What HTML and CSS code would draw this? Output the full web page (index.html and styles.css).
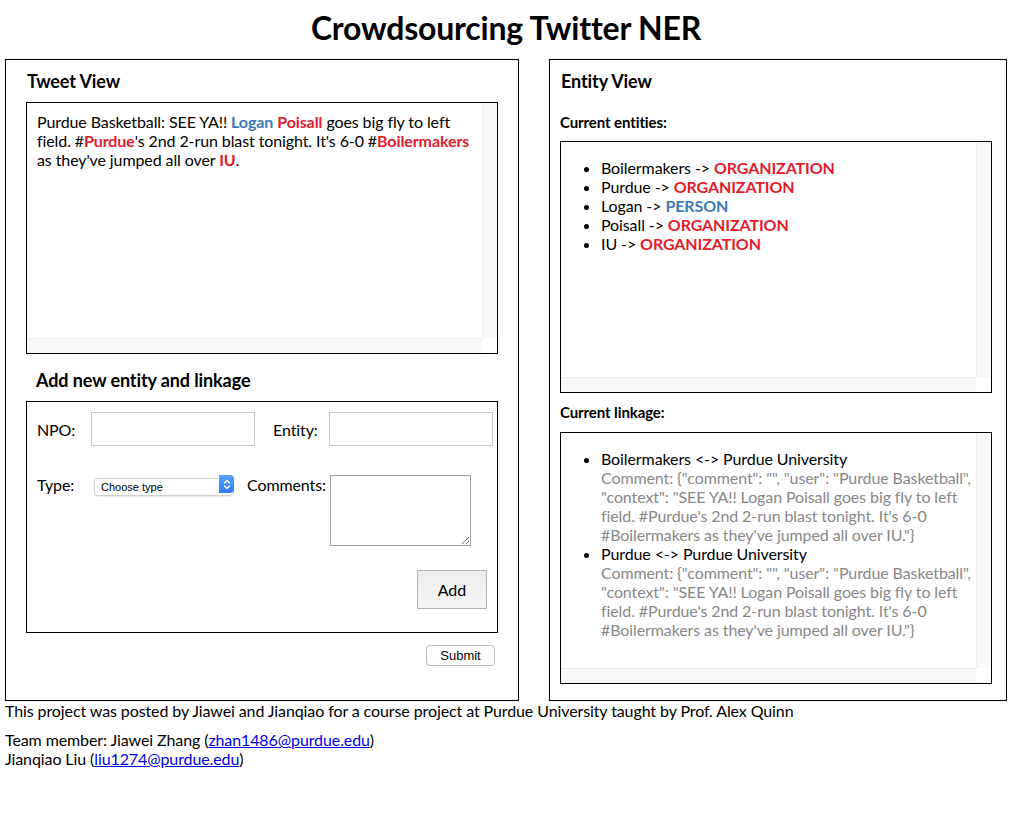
FILE: index.html
```html
<!DOCTYPE html>
<html>
<head>
<meta charset="utf-8">
<title>Crowdsourcing Twitter NER</title>
<link rel="stylesheet" href="styles.css">
</head>
<body>
<h1 class="title">Crowdsourcing Twitter NER</h1>
<div class="main">
  <section class="panel panel-left">
    <h2 class="panel-title">Tweet View</h2>
    <div class="scrollbox tweet-box">
      <div class="scroll-content tweet-text">Purdue Basketball: SEE YA!! <b class="per">Logan</b> <b class="org">Poisall</b> goes big fly to left field. #<b class="org">Purdue</b>'s 2nd 2-run blast tonight. It's 6-0 #<b class="org">Boilermakers</b> as they've jumped all over <b class="org">IU</b>.</div>
      <div class="vbar"></div>
      <div class="hbar"></div>
      <div class="corner"></div>
    </div>
    <h2 class="panel-title sub">Add new entity and linkage</h2>
    <div class="form-box">
      <div class="row row-1">
        <label class="lbl lbl-npo">NPO:</label>
        <input class="text-input" type="text">
        <label class="lbl lbl-entity">Entity:</label>
        <input class="text-input" type="text">
      </div>
      <div class="row row-2">
        <label class="lbl lbl-type">Type:</label>
        <div class="select-wrap">
          <select class="type-select"><option>Choose type</option></select>
          <span class="select-arrow"><svg width="8" height="11" viewBox="0 0 8 11"><path d="M1.5 4 L4 1.5 L6.5 4 M1.5 7 L4 9.5 L6.5 7" fill="none" stroke="#fff" stroke-width="1.3" stroke-linecap="round" stroke-linejoin="round"/></svg></span>
        </div>
        <label class="lbl lbl-comments">Comments:</label>
        <textarea class="comments"></textarea>
      </div>
      <div class="row row-3">
        <button class="btn-add" type="button">Add</button>
      </div>
    </div>
    <div class="submit-row"><button class="btn-submit" type="button">Submit</button></div>
  </section>
  <section class="panel panel-right">
    <h2 class="panel-title">Entity View</h2>
    <h3 class="section-title first">Current entities:</h3>
    <div class="scrollbox list-box">
      <div class="scroll-content">
        <ul class="list">
          <li>Boilermakers -&gt; <b class="org">ORGANIZATION</b></li>
          <li>Purdue -&gt; <b class="org">ORGANIZATION</b></li>
          <li>Logan -&gt; <b class="per">PERSON</b></li>
          <li>Poisall -&gt; <b class="org">ORGANIZATION</b></li>
          <li>IU -&gt; <b class="org">ORGANIZATION</b></li>
        </ul>
      </div>
      <div class="vbar"></div>
      <div class="hbar"></div>
      <div class="corner"></div>
    </div>
    <h3 class="section-title second">Current linkage:</h3>
    <div class="scrollbox list-box">
      <div class="scroll-content">
        <ul class="list">
          <li>Boilermakers &lt;-&gt; Purdue University<br><span class="comment">Comment: {"comment": "", "user": "Purdue Basketball", "context": "SEE YA!! Logan Poisall goes big fly to left field. #Purdue's 2nd 2-run blast tonight. It's 6-0 #Boilermakers as they've jumped all over IU."}</span></li>
          <li>Purdue &lt;-&gt; Purdue University<br><span class="comment">Comment: {"comment": "", "user": "Purdue Basketball", "context": "SEE YA!! Logan Poisall goes big fly to left field. #Purdue's 2nd 2-run blast tonight. It's 6-0 #Boilermakers as they've jumped all over IU."}</span></li>
        </ul>
      </div>
      <div class="vbar"></div>
      <div class="hbar"></div>
      <div class="corner"></div>
    </div>
  </section>
</div>
<footer class="footer">
  <p class="foot-line">This project was posted by Jiawei and Jianqiao for a course project at Purdue University taught by Prof. Alex Quinn</p>
  <p class="foot-team">Team member: Jiawei Zhang (<a href="#">zhan1486@purdue.edu</a>)<br>Jianqiao Liu (<a href="#">liu1274@purdue.edu</a>)</p>
</footer>
</body>
</html>
```
FILE: styles.css
```css
html, body {
  background: #fff;
}
body {
  margin: 0 5px;
  font-family: Lato, "Open Sans", sans-serif;
  font-size: 16px;
  line-height: 19px;
  letter-spacing: -0.1px;
  color: #000;
}
.title {
  margin: 0;
  padding-top: 10px;
  height: 59px;
  box-sizing: border-box;
  text-align: center;
  font-size: 32px;
  line-height: 36px;
  font-weight: 700;
  letter-spacing: -0.2px;
}
.main {
  display: flex;
  gap: 30px;
  align-items: stretch;
}
.panel {
  border: 1px solid #000;
  box-sizing: border-box;
  height: 642px;
}
.panel-left {
  width: 514px;
  padding: 0 20px;
}
.panel-right {
  width: 458px;
  padding: 0 14px 0 10px;
}
.panel-title {
  margin: 0;
  font-size: 18px;
  line-height: 22px;
  font-weight: 700;
  padding: 10px 0 10px 1px;
}
.panel-title.sub {
  padding: 15px 0 10px 10px;
}
.section-title {
  margin: 0;
  font-size: 15px;
  line-height: 19px;
  font-weight: 700;
  padding: 11px 0 9px 0;
}
.section-title.second {
  padding-top: 10px;
  padding-bottom: 10px;
}
.scrollbox {
  border: 1px solid #000;
  box-sizing: border-box;
  display: grid;
  grid-template-columns: 1fr 15px;
  grid-template-rows: 1fr 15px;
  overflow: hidden;
}
.scroll-content {
  grid-column: 1;
  grid-row: 1;
  overflow: hidden;
  min-width: 0;
}
.vbar {
  grid-column: 2;
  grid-row: 1;
  background: #f8f8f8;
  border-left: 1px solid #ececec;
}
.hbar {
  grid-column: 1;
  grid-row: 2;
  background: #f8f8f8;
  border-top: 1px solid #ececec;
}
.corner {
  grid-column: 2;
  grid-row: 2;
  background: #fff;
}
.tweet-box {
  height: 252px;
}
.tweet-text {
  padding: 9px 10px 0 10px;
  margin-right: -15px;
}
.org {
  color: #e41b2c;
  font-weight: 700;
}
.per {
  color: #3d7ab8;
  font-weight: 700;
}
.form-box {
  border: 1px solid #000;
  height: 232px;
  box-sizing: border-box;
  padding: 10px;
}
.row {
  display: flex;
}
.row > * {
  flex-shrink: 0;
}
.row-1 {
  align-items: center;
  height: 34px;
}
.lbl {
  font-size: 16px;
}
.lbl-npo {
  width: 54px;
}
.text-input {
  width: 164px;
  height: 34px;
  box-sizing: border-box;
  border: 1px solid #c8c8c8;
  margin: 0;
  padding: 0 4px;
  font: inherit;
}
.lbl-entity {
  margin-left: 18px;
  width: 56px;
}
.row-2 {
  margin-top: 29px;
  align-items: flex-start;
}
.lbl-type {
  width: 57px;
  margin-top: 0;
}
.select-wrap {
  position: relative;
  width: 140px;
  height: 18px;
  margin-top: 0;
}
.type-select {
  -webkit-appearance: none;
  appearance: none;
  width: 140px;
  height: 18px;
  box-sizing: border-box;
  border: 1px solid #cfcfcf;
  border-radius: 4px;
  background: #fff;
  font-family: "Liberation Sans", Arial, sans-serif;
  font-size: 11px;
  letter-spacing: 0;
  padding: 0 0 0 6px;
  margin: 0;
  color: #000;
  box-shadow: 0 1px 1px rgba(0,0,0,0.08);
}
.select-arrow {
  position: absolute;
  right: 0;
  top: 0;
  width: 15px;
  height: 18px;
  background: linear-gradient(#5aa2fb, #2f7cf6);
  border-radius: 0 4px 4px 0;
  display: flex;
  align-items: center;
  justify-content: center;
  pointer-events: none;
}
.lbl-comments {
  margin-left: 13px;
  width: 83px;
  margin-top: 0;
}
.comments {
  width: 141px;
  height: 71px;
  box-sizing: border-box;
  border: 1px solid #a0a0a0;
  margin: 0;
  padding: 2px;
  resize: both;
}
.row-3 {
  justify-content: flex-end;
  margin-top: 24px;
}
.btn-add {
  width: 70px;
  height: 39px;
  border: 1px solid #b4b4b4;
  background: linear-gradient(#ececec, #f6f6f6);
  font-family: Lato, "Open Sans", sans-serif;
  font-size: 16px;
  color: #000;
  padding: 0;
  margin: 0;
}
.submit-row {
  display: flex;
  justify-content: flex-end;
  padding-top: 12px;
  padding-right: 3px;
}
.btn-submit {
  width: 69px;
  height: 21px;
  border: 1px solid #b8b8b8;
  border-radius: 4px;
  background: #fff;
  font-family: "Liberation Sans", Arial, sans-serif;
  font-size: 13px;
  color: #000;
  padding: 0;
  margin: 0;
}
.list-box {
  height: 252px;
}
.list-box.second-box {
  height: 253px;
}
.list {
  margin: 16px 0;
  padding-left: 40px;
}
.comment {
  color: #888;
}
.footer {
  font-size: 16px;
  line-height: 19px;
}
.foot-line {
  margin: 0;
}
.foot-team {
  margin: 10px 0 0 0;
}
.footer a {
  color: #0000ee;
}
```
